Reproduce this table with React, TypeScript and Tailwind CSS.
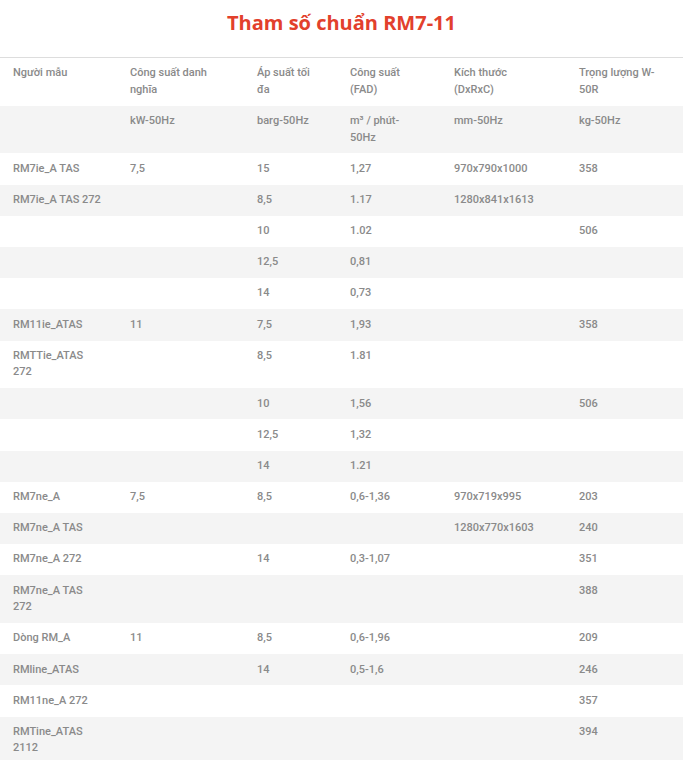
type Cell = string | string[];

const header: Cell[] = [
  "Người mẫu",
  ["Công suất danh", "nghĩa"],
  ["Áp suất tối", "đa"],
  ["Công suất", "(FAD)"],
  ["Kích thước", "(DxRxC)"],
  ["Trọng lượng W-", "50R"],
];

const rows: Cell[][] = [
  ["", "kW-50Hz", "barg-50Hz", ["m³ / phút-", "50Hz"], "mm-50Hz", "kg-50Hz"],
  ["RM7ie_A TAS", "7,5", "15", "1,27", "970x790x1000", "358"],
  ["RM7ie_A TAS 272", "", "8,5", "1.17", "1280x841x1613", ""],
  ["", "", "10", "1.02", "", "506"],
  ["", "", "12,5", "0,81", "", ""],
  ["", "", "14", "0,73", "", ""],
  ["RM11ie_ATAS", "11", "7,5", "1,93", "", "358"],
  [["RMTTie_ATAS", "272"], "", "8,5", "1.81", "", ""],
  ["", "", "10", "1,56", "", "506"],
  ["", "", "12,5", "1,32", "", ""],
  ["", "", "14", "1.21", "", ""],
  ["RM7ne_A", "7,5", "8,5", "0,6-1,36", "970x719x995", "203"],
  ["RM7ne_A TAS", "", "", "", "1280x770x1603", "240"],
  ["RM7ne_A 272", "", "14", "0,3-1,07", "", "351"],
  [["RM7ne_A TAS", "272"], "", "", "", "", "388"],
  ["Dòng RM_A", "11", "8,5", "0,6-1,96", "", "209"],
  ["RMline_ATAS", "", "14", "0,5-1,6", "", "246"],
  ["RM11ne_A 272", "", "", "", "", "357"],
  [["RMTine_ATAS", "2112"], "", "", "", "", "394"],
];

const cols = ["w-[117px]", "w-[127px]", "w-[93px]", "w-[104px]", "w-[125px]", "w-[117px]"];

function Text({ c }: { c: Cell }) {
  if (Array.isArray(c))
    return (
      <>
        {c.map((l, i) => (
          <div key={i} className="whitespace-nowrap">{l}</div>
        ))}
      </>
    );
  return <div className="whitespace-nowrap">{c || "\u00a0"}</div>;
}

function Row({ cells, gray }: { cells: Cell[]; gray: boolean }) {
  return (
    <div className={`flex ${gray ? "bg-[#f4f4f4]" : "bg-white"}`}>
      {cells.map((c, i) => (
        <div key={i} className={`${cols[i]} shrink-0 pl-[13px] pt-[7.35px] pb-[7.35px]`}>
          <Text c={c} />
        </div>
      ))}
    </div>
  );
}

export default function App() {
  return (
    <div className="w-[683px] h-[760px] overflow-hidden bg-white">
      <h2
        className="pt-[9px] h-[57px] text-center text-[20px] font-bold leading-[27px] text-[#e2402c]"
        style={{ fontFamily: "'Open Sans', sans-serif" }}
      >
        Tham số chuẩn RM7-11
      </h2>
      <div
        className="border-t border-[#dddddd] text-[11px] leading-[16.5px] font-medium text-[#8a8a8a]"
        style={{ fontFamily: "Roboto, sans-serif" }}
      >
        <Row cells={header} gray={false} />
        {rows.map((r, i) => (
          <Row key={i} cells={r} gray={i % 2 === 0} />
        ))}
      </div>
    </div>
  );
}
